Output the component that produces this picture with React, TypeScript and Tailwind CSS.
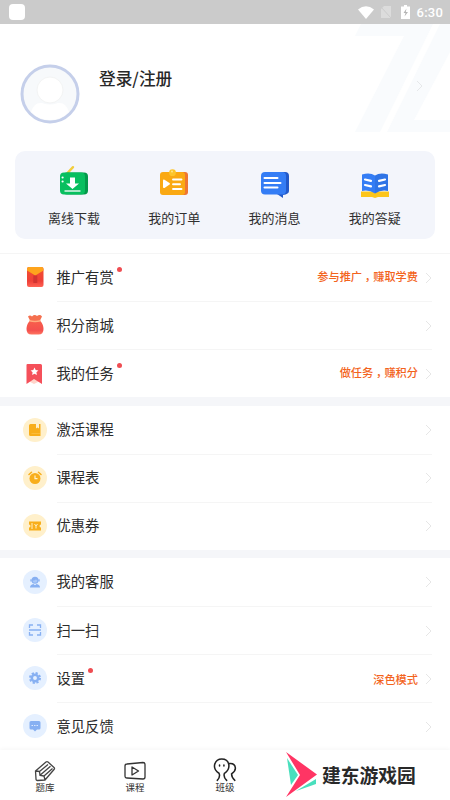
import type { ReactNode } from 'react'

type Row = { label: string; icon: ReactNode; dot?: boolean; note?: string[] }

/* Shortcut icons */
const DownloadIcon = () => (
  <svg width="30" height="30" viewBox="0 0 30 30">
    <path d="M8.500 8 14 2.200" stroke="#f2cd3c" strokeWidth="2.400" strokeLinecap="round" />
    <rect x="4" y="7.500" width="25" height="22" rx="4" fill="#04994a" />
    <rect x="1" y="7.500" width="25" height="22" rx="4" fill="#08bf5f" />
    <path d="M11 12.500h5v6h4L13.500 24 7 18.500h4z" fill="#fff" />
    <path d="M5.500 26h16" stroke="#fff" strokeWidth="1.300" />
    <circle cx="3.600" cy="12.500" r="1.100" fill="#fff" />
    <circle cx="3.600" cy="16.500" r="1.100" fill="#fff" />
  </svg>
)

const OrderIcon = () => (
  <svg width="30" height="30" viewBox="0 0 30 30">
    <rect x="5" y="7" width="24" height="23" rx="3" fill="#ef7631" />
    <rect x="1" y="7" width="25" height="23" rx="3" fill="#faa913" />
    <circle cx="13.500" cy="7.700" r="3.400" fill="#fdc52b" />
    <circle cx="13" cy="6.500" r="1" fill="#fde58b" />
    <path d="M4 15.500q0-1.500 1.500-.8l5 3.300q1 .8 0 1.600l-5 3.300q-1.500.7-1.500-.8z" fill="#fff" />
    <path d="M14 14.500h8.500M14 19.300h7M14 24h8.500" stroke="#fff" strokeWidth="1.900" strokeLinecap="round" />
  </svg>
)

const MessageIcon = () => (
  <svg width="30" height="30" viewBox="0 0 30 30" className="translate-y-1">
    <path d="M6 3h19q4 0 4 4v15q0 3-6 4v3l-6-4H6z" fill="#2259c9" />
    <rect x="1" y="3" width="25" height="22.500" rx="4" fill="#347df5" />
    <path d="M4.500 9h13M4.500 14h16M4.500 18.500h13" stroke="#fff" strokeWidth="2" strokeLinecap="round" />
  </svg>
)

const BookIcon = () => (
  <svg width="30" height="30" viewBox="0 0 30 30" className="translate-y-[3px]">
    <path d="M1 23.500h28V29H18l-3 1-3-1H1z" fill="#fcc51b" />
    <path d="M2 6.500Q10 4 15 7.500v18Q9 21.500 2 23z" fill="#347df5" />
    <path d="M28 6.500Q20 4 15 7.500v18q6-4 13-2.500z" fill="#2f74e6" />
    <path d="m5 11.500 6 1.300M5 17l6 1.300M19 12.800l6-1.300M19 18.300l6-1.300" stroke="#fff" strokeWidth="2.200" strokeLinecap="round" />
  </svg>
)

/* Red list icons */
const EnvelopeIcon = () => (
  <svg width="24" height="24" viewBox="0 0 24 24" className="-translate-y-px">
    <defs>
      <linearGradient id="envelope" x2="0" y2="1">
        <stop stopColor="#f4502f" />
        <stop offset=".7" stopColor="#ee4038" />
        <stop offset="1" stopColor="#ff6354" />
      </linearGradient>
    </defs>
    <rect x="4" y="2" width="16.500" height="20" rx="2" fill="url(#envelope)" />
    <path d="M4 4q0-2 2-2h12.500q2 0 2 2v1.500l-8.200 5L4 5.500z" fill="#fea41d" />
    <path d="M10.300 10.500h4V18h-4z" fill="#d23431" />
  </svg>
)

const BagIcon = () => (
  <svg width="24" height="24" viewBox="0 0 24 24">
    <defs>
      <linearGradient id="bag" x2="0" y2="1">
        <stop stopColor="#f8604b" />
        <stop offset=".7" stopColor="#f4504e" />
        <stop offset="1" stopColor="#ff7560" />
      </linearGradient>
    </defs>
    <path d="M5 3.500q2-2 4 0 2.500-2.500 5-.5 3-2 5 .5l-2.500 5h-9z" fill="#f5704f" />
    <path d="M7 7.500h10q3.500 4 3.500 8.500 0 5.500-5 5.500H8.500q-5 0-5-5.500 0-4.500 3.500-8.500z" fill="url(#bag)" />
    <path d="M6.500 7.800q5.500 1.400 11 0" stroke="#ffad7f" strokeWidth="1.500" fill="none" />
  </svg>
)

const TaskIcon = () => (
  <svg width="24" height="24" viewBox="0 0 24 24" className="translate-y-px">
    <path d="M3.500 18 11 16l8 2-8 4z" fill="#ffd4ca" />
    <path d="M4.500 2h13q1.500 0 1.500 1.500V22l-8-5-7.500 5V3q0-1 1-1z" fill="#f5505a" />
    <path d="m11.500 5.500 1.200 2.500 2.700.4-2 1.900.5 2.700-2.400-1.300L9.100 13l.5-2.700-2-1.900 2.700-.4z" fill="#fff" />
  </svg>
)

/* Icons that sit in a tinted circle */
const CourseIcon = () => (
  <svg width="14" height="14" viewBox="0 0 14 14" fill="#f8ae1b">
    <path d="M2.500 1H8v4.500l1.500-1 1.500 1V1h1.500v12h-10q-1.500 0-1.500-1.500v-9Q1 1 2.500 1z" />
    <path d="M3.500 10.500H12" stroke="#fbbf42" strokeWidth=".8" />
  </svg>
)

const AlarmIcon = () => (
  <svg width="14" height="14" viewBox="0 0 14 14">
    <circle cx="7" cy="7.500" r="5.500" fill="#f8ae1b" />
    <path d="M1 3.500 3.500 1.300M13 3.500l-2.500-2.200" stroke="#f8ae1b" strokeWidth="1.500" strokeLinecap="round" />
    <path d="M7 4.500v3.200h2.500" stroke="#fff1c9" strokeWidth="1.200" fill="none" />
  </svg>
)

const CouponIcon = () => (
  <svg width="14" height="14" viewBox="0 0 14 14">
    <path d="M1 2.500h12v3a1.500 1.500 0 0 0 0 3v3H1v-3a1.500 1.500 0 0 0 0-3z" fill="#f8ae1b" />
    <path d="M4 4v6M6.500 5 8 7l1.500-2M8 7v2.500" stroke="#fff0c8" fill="none" />
  </svg>
)

const ServiceIcon = () => (
  <svg width="14" height="14" viewBox="0 0 14 14" fill="#87b0f2">
    <circle cx="7" cy="5.200" r="3.500" />
    <path d="M2 12.500q0-3 3.500-3.500L7 10.300 8.500 9q3.500.5 3.500 3.500z" />
    <path d="M3 4.300v2.200M11 4.300v2.200" stroke="#87b0f2" strokeWidth="1.300" />
    <path d="M4.500 5.500q2.500.3 3.500-1.300.5 1 1.500 1.300-.2 2.300-2.500 2.300t-2.500-2.300z" fill="#a9c8f8" />
  </svg>
)

const ScanIcon = () => (
  <svg width="14" height="14" viewBox="0 0 14 14" fill="none" stroke="#87b0f2" strokeWidth="1.300">
    <path d="M1.500 5V2H5M9 2h3.500v3M12.500 9v3H9M5 12H1.500V9M1 7h12" />
  </svg>
)

const GearIcon = () => (
  <svg width="14" height="14" viewBox="0 0 14 14">
    <circle cx="7" cy="7" r="5" fill="none" stroke="#87b0f2" strokeWidth="2" strokeDasharray="2.200 1.727" />
    <circle cx="7" cy="7" r="3.200" fill="none" stroke="#87b0f2" strokeWidth="2.500" />
  </svg>
)

const FeedbackIcon = () => (
  <svg width="14" height="14" viewBox="0 0 14 14">
    <path d="M3 2h8q1.500 0 1.500 1.500V9q0 1.500-1.500 1.500H9L7 12.500l-2-2H3Q1.500 10.500 1.500 9V3.500Q1.500 2 3 2z" fill="#87b0f2" />
    <path d="M3.500 6.500h7" stroke="#dce9ff" strokeDasharray="1.500 1" />
  </svg>
)

const Round = ({ blue, children }: { blue?: boolean; children: ReactNode }) => (
  <span className={`flex size-6 items-center justify-center rounded-full ${blue ? 'bg-[#e5f0ff]' : 'bg-[#fff0cb]'}`}>
    {children}
  </span>
)

const SHORTCUTS = [
  { label: '离线下载', icon: <DownloadIcon /> },
  { label: '我的订单', icon: <OrderIcon /> },
  { label: '我的消息', icon: <MessageIcon /> },
  { label: '我的答疑', icon: <BookIcon /> },
]

const GROUPS: Row[][] = [
  [
    { label: '推广有赏', icon: <EnvelopeIcon />, dot: true, note: ['参与推广', '赚取学费'] },
    { label: '积分商城', icon: <BagIcon /> },
    { label: '我的任务', icon: <TaskIcon />, dot: true, note: ['做任务', '赚积分'] },
  ],
  [
    { label: '激活课程', icon: <Round><CourseIcon /></Round> },
    { label: '课程表', icon: <Round><AlarmIcon /></Round> },
    { label: '优惠券', icon: <Round><CouponIcon /></Round> },
  ],
  [
    { label: '我的客服', icon: <Round blue><ServiceIcon /></Round> },
    { label: '扫一扫', icon: <Round blue><ScanIcon /></Round> },
    { label: '设置', icon: <Round blue><GearIcon /></Round>, dot: true, note: ['深色模式'] },
    { label: '意见反馈', icon: <Round blue><FeedbackIcon /></Round> },
  ],
]

const Chevron = ({ className }: { className: string }) => (
  <svg width="7" height="12" viewBox="0 0 7 12" fill="none" stroke="currentColor" className={className}>
    <path d="m1 1 5 5-5 5" />
  </svg>
)

function StatusBar() {
  return (
    <div className="flex h-6 shrink-0 items-center bg-[#cbcbcb] pr-[7px] pl-[9px] text-white">
      <span className="size-4 rounded bg-white" />
      <svg width="16" height="13" viewBox="0 0 16 13" className="ml-auto" fill="#fff">
        <path d="M0 3.500Q8-3 16 3.500L8 13z" />
      </svg>
      <svg width="10" height="12" viewBox="0 0 10 12" className="ml-[7px]">
        <path d="M3 0h7v12H0V3z" fill="#dcdcdc" />
        <path d="m0 1 10 11" stroke="#cbcbcb" />
      </svg>
      <svg width="9" height="14" viewBox="0 0 9 14" className="ml-[10px]">
        <path d="M3 0h3v1.500h3V14H0V1.500h3z" fill="#fff" />
        <path d="M5.500 3.500 2.500 8H4.500l-1 3.500L7 7H4.800z" fill="#b5b5b5" />
      </svg>
      <span className="ml-[7px] pt-px font-[Roboto] text-[13px] font-medium tracking-[0.2px]">6:30</span>
    </div>
  )
}

function Profile() {
  return (
    <div className="relative flex h-[127px] shrink-0 pt-10 pl-5">
      {/* Backdrop mark */}
      <svg width="96" height="108" viewBox="0 0 96 108" className="absolute top-0 right-0" fill="#f9fbfd">
        <path d="M7 0h72L26 108H1L50 12H1z" />
        <path d="M86 0h10v28L60 96h36v12H33z" />
      </svg>
      <svg width="60" height="60" viewBox="0 0 60 60">
        <circle cx="30" cy="30" r="28" fill="#f7f9fb" stroke="#c5cfea" strokeWidth="3" />
        <circle cx="30" cy="26" r="13" fill="#fff" stroke="#f3f4f4" />
        <path d="M11 48q3-10 11-9 8 3 16 0 8-1 11 9-8 8-19 8t-19-8z" fill="#fff" />
      </svg>
      <h1 className="ml-[19px] pt-[2px] text-[16.700px] leading-6 font-medium text-[#282828]">登录/注册</h1>
      <Chevron className="absolute top-[56px] right-[27px] text-[#e6e8ea]" />
    </div>
  )
}

function MenuRow({ row, line }: { row: Row; line: boolean }) {
  return (
    <div className="flex h-12 items-center pl-[23px]">
      <span className="flex w-6 justify-center">{row.icon}</span>
      <div className={`mr-[18px] ml-[9.500px] flex h-full grow items-center ${line ? 'border-t border-[#f5f5f5]' : ''}`}>
        <span className="relative pb-0.5 text-[14.300px] leading-5 text-[#2c2c2c]">
          {row.label}
          {row.dot && <i className="absolute top-0 -right-[8px] size-[5px] rounded-full bg-[#ef4d52]" />}
        </span>
        {row.note && (
          <span className="ml-auto flex text-[11.200px] leading-4 font-medium text-[#f3641d]">
            <span>{row.note[0]}</span>
            {row.note[1] && <span className="pt-[3px] font-['Noto_Sans_CJK_TC',sans-serif]">，</span>}
            <span>{row.note[1]}</span>
          </span>
        )}
        <Chevron className={`text-[#e6e6e6] ${row.note ? 'ml-[7px]' : 'ml-auto'}`} />
      </div>
    </div>
  )
}

function TabBar() {
  return (
    <nav className="relative flex h-[50px] shrink-0 bg-white text-[9.500px] leading-3 text-[#333] shadow-[0_-1px_4px_rgba(0,0,0,0.04)]">
      <div className="flex w-[90px] flex-col items-center pt-[10px]">
        <svg width="22" height="22" viewBox="0 0 22 22" fill="none" stroke="#444" strokeWidth="1.300" strokeLinejoin="round">
          <path d="m1.500 11 10.500-9q1-.8 2 0l6 5.500q1 1 0 2L11 20l-7.500.5q-1.500 0-1.500-1.500zM1.500 11l4 .5.500 3.800 4 .7 1 4M5.500 11.500 14 4.500M6 15.300l10.500-9M10 16l8.500-7.500" />
        </svg>
        <span className="-mt-px">题库</span>
      </div>
      <div className="flex w-[90px] flex-col items-center pt-[10px]">
        <svg width="22" height="22" viewBox="0 0 22 22" fill="none" stroke="#333" strokeWidth="1.300" strokeLinejoin="round">
          <path d="m3 4 16-1.500q2 0 2 2V17q0 2-2 2L3 18q-2 0-2-2V6q0-2 2-2zM8 7l6.500 4L8 15z" />
        </svg>
        <span className="-mt-px">课程</span>
      </div>
      <div className="flex w-[90px] flex-col items-center pt-[8px]">
        <svg width="24" height="24" viewBox="0 0 22 22" fill="none" stroke="#222" strokeWidth="1.400" strokeLinecap="round">
          <path d="M4 20.500q3-3.500 1.500-6.500-5-3-4-8Q3 1 8 1q5.500 0 6.500 5 .7 5-4 8-1.300 3 2 6.500M15 5q5-.5 5.500 4 .3 3-3.500 5.500 0 3.500 3 6" />
          <path d="M6 6.500v.8M10 6.500v.8" />
        </svg>
        <span className="-mt-px">班级</span>
      </div>
      {/* Brand */}
      <div className="flex w-[180px] items-center pl-4">
        <svg width="32" height="46" viewBox="0 0 32 46">
          <path d="m1 6 11 17L5 33z" fill="#49dfbd" />
          <path d="m10 39 20-12v5z" fill="#49dfbd" />
          <path d="M0 0 31 22.500 0 45 14 23z" fill="#ff3564" />
        </svg>
        <span className="ml-[4px] text-[18.800px] leading-6 font-bold whitespace-nowrap text-[#292929]">建东游戏园</span>
      </div>
    </nav>
  )
}

export default function App() {
  return (
    <div className="flex h-[800px] w-[450px] flex-col overflow-hidden bg-white font-['Noto_Sans_CJK_SC',sans-serif]">
      <StatusBar />
      <Profile />
      <section className="mx-[15px] grid h-[88px] shrink-0 grid-cols-4 rounded-[10px] bg-[#f3f5fb] pr-[10px] pl-[9px]">
        {SHORTCUTS.map((s) => (
          <div key={s.label} className="flex flex-col items-center pt-[14px] text-[13px] leading-5 text-[#303030]">
            {s.icon}
            <span className="mt-[13px]">{s.label}</span>
          </div>
        ))}
      </section>
      <main className="mt-[14px] flex grow flex-col justify-between bg-[#f5f6f9]">
        {GROUPS.map((rows, i) => (
          <section key={i} className={i === 0 ? 'border-t border-[#f5f5f5] bg-white [&>div:first-child]:h-[47px]' : 'bg-white'}>
            {rows.map((row, j) => (
              <MenuRow key={row.label} row={row} line={j > 0} />
            ))}
          </section>
        ))}
      </main>
      <TabBar />
    </div>
  )
}
